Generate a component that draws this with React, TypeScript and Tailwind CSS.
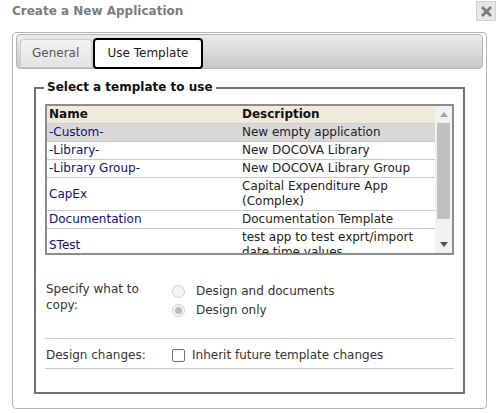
import React from "react";

const rows: { name: string; desc: string[]; selected?: boolean }[] = [
  { name: "-Custom-", desc: ["New empty application"], selected: true },
  { name: "-Library-", desc: ["New DOCOVA Library"] },
  { name: "-Library Group-", desc: ["New DOCOVA Library Group"] },
  { name: "CapEx", desc: ["Capital Expenditure App", "(Complex)"] },
  { name: "Documentation", desc: ["Documentation Template"] },
  { name: "STest", desc: ["test app to test exprt/import", "date time values"] },
];

function Radio({ checked }: { checked?: boolean }) {
  return (
    <span className="w-[13px] h-[13px] rounded-full border border-[#cfcfcf] bg-[#f4f4f4] flex items-center justify-center shrink-0">
      {checked && <span className="w-[7px] h-[7px] rounded-full bg-[#bcbcbc]" />}
    </span>
  );
}

export default function App() {
  return (
    <div className="w-[500px] h-[413px] bg-white font-['DejaVu_Sans',sans-serif] text-[12px] leading-[15px] text-[#333]">
      <div className="flex justify-between h-[32px]">
        <div className="pl-[12px] pt-[4px] font-bold text-[12px] text-[#7c7c7c]">Create a New Application</div>
        <div className="mt-[1px] mr-[4px] w-[20px] h-[20px] bg-[#e6e6e6] border border-[#d2d2d2] flex items-center justify-center">
          <svg width="11" height="11" viewBox="0 0 11 11">
            <path d="M2 2 L9 9 M9 2 L2 9" stroke="#7a7a7a" strokeWidth="2.8" strokeLinecap="square" />
          </svg>
        </div>
      </div>
      <div className="ml-[12px] w-[475px] h-[377px] border border-[#b3b3b3] rounded-[4px] pt-[1px] px-[3px]">
        <div className="h-[35px] border border-[#b4b4b4] rounded-[4px] bg-gradient-to-b from-[#ebebeb] to-[#c8c8c8] flex items-end pl-[3px] gap-[1px]">
          <div className="w-[72px] h-[28px] mb-[1px] border border-[#cdcdcd] border-b-0 rounded-t-[4px] bg-gradient-to-b from-[#f3f3f3] to-[#e3e3e3] flex items-center pl-[11px] text-[#555] text-[12px]">
            General
          </div>
          <div className="w-[110px] h-[31px] -mb-[1px] border-2 border-black rounded-[4px] bg-white flex items-center justify-center text-[#222] text-[12px]">
            Use Template
          </div>
        </div>
        <fieldset className="mt-[11px] ml-[18px] w-[430px] h-[314px] border-2 border-[#727272] px-[9px]">
          <legend className="-ml-[1px] px-[3px] font-bold text-[12px] text-[#111]">Select a template to use</legend>
          <div className="mt-[9px] w-[409px] h-[151px] border-2 border-[#8c8c8c] flex overflow-hidden">
            <div className="flex-1 overflow-hidden">
              <div className="flex h-[18px] bg-[#efebdc] font-bold text-[#111] border-b border-[#cfcfcf] items-center">
                <div className="w-[193px] pl-[2px]">Name</div>
                <div className="flex-1 pl-[2px]">Description</div>
              </div>
              {rows.map((r) => (
                <div
                  key={r.name}
                  className={`flex items-center border-b border-[#c9c9c9] py-[1px] ${r.selected ? "bg-[#d8d8d8]" : "bg-white"}`}
                >
                  <div className="w-[193px] pl-[2px] text-[#101080]">{r.name}</div>
                  <div className="flex-1 pl-[2px] text-[#222] whitespace-nowrap">
                    {r.desc.map((d) => (
                      <div key={d}>{d}</div>
                    ))}
                  </div>
                </div>
              ))}
            </div>
            <div className="w-[17px] bg-[#f1f1f1] flex flex-col items-center">
              <div className="h-[17px] flex items-center justify-center">
                <svg width="8" height="5" viewBox="0 0 8 5">
                  <path d="M0 5 L4 0 L8 5 Z" fill="#a3a3a3" />
                </svg>
              </div>
              <div className="w-[13px] h-[96px] bg-[#c1c1c1]" />
              <div className="flex-1" />
              <div className="h-[17px] flex items-center justify-center">
                <svg width="8" height="5" viewBox="0 0 8 5">
                  <path d="M0 0 L8 0 L4 5 Z" fill="#505050" />
                </svg>
              </div>
            </div>
          </div>
          <div className="mt-[26px] flex pl-[1px] h-[57px]">
            <div className="w-[126px] leading-[16px]">
              Specify what to
              <br />
              copy:
            </div>
            <div className="flex flex-col gap-[4px] pt-[3px]">
              <label className="flex items-center gap-[11px]">
                <Radio />
                <span>Design and documents</span>
              </label>
              <label className="flex items-center gap-[11px]">
                <Radio checked />
                <span>Design only</span>
              </label>
            </div>
          </div>
          <div className="border-t border-[#c8c8c8] border-b h-[31px] flex items-center pl-[1px] pt-[3px]">
            <div className="w-[126px]">Design changes:</div>
            <label className="flex items-center gap-[7px]">
              <span className="w-[13px] h-[13px] rounded-[2px] border border-[#707070] bg-white" />
              <span>Inherit future template changes</span>
            </label>
          </div>
        </fieldset>
      </div>
    </div>
  );
}
